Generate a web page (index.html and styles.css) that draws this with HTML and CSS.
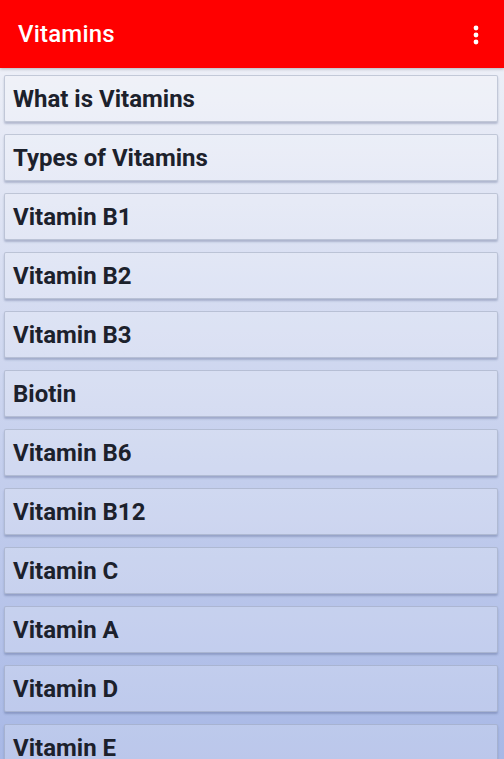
FILE: index.html
```html
<!DOCTYPE HTML>
<html lang="en-US">
<head>
<meta charset="utf-8">
<meta name="viewport" content="width=device-width">
<title>Vitamins</title>
<link rel="stylesheet" href="styles.css">
</head>
<body>
  <header class="toolbar">
    <h1>Vitamins</h1>
    <svg class="menu" width="6" height="20" viewBox="0 0 6 20">
      <circle cx="3" cy="3" r="2.4" fill="#fff"/>
      <circle cx="3" cy="10" r="2.4" fill="#fff"/>
      <circle cx="3" cy="17" r="2.4" fill="#fff"/>
    </svg>
  </header>
  <ul class="topics">
    <li>What is Vitamins</li>
    <li>Types of Vitamins</li>
    <li>Vitamin B1</li>
    <li>Vitamin B2</li>
    <li>Vitamin B3</li>
    <li>Biotin</li>
    <li>Vitamin B6</li>
    <li>Vitamin B12</li>
    <li>Vitamin C</li>
    <li>Vitamin A</li>
    <li>Vitamin D</li>
    <li>Vitamin E</li>
  </ul>
</body>
</html>
```

FILE: styles.css
```css
* {
	box-sizing: border-box;
}
html, body {
	height: 100%;
}
body {
	margin: 0;
	overflow: hidden;
	background: linear-gradient(#f3f4f9, #a8b8e6 759px);
	font-family: Roboto, "Liberation Sans", sans-serif;
}
.toolbar {
	height: 68px;
	display: flex;
	align-items: center;
	justify-content: space-between;
	padding: 0 25px 0 18px;
	background: #ff0000;
	box-shadow: 0 1px 3px rgba(0, 0, 0, .25);
	position: relative;
}
.toolbar h1 {
	margin: 0;
	color: #fff;
	font-size: 24px;
	font-weight: 500;
	letter-spacing: .2px;
}
.menu { display: block; margin-top: 1px; }

.topics {
	list-style: none;
	margin: 0;
	padding: 7px 6px 0 4px;
}
.topics li {
	height: 47px;
	margin-bottom: 12px;
	padding: 0 8px;
	display: flex;
	align-items: center;
	color: #1c212c;
	font-size: 24px;
	font-weight: 700;
	background: rgba(255, 255, 255, .22);
	border: 1px solid rgba(140, 150, 175, .45);
	border-radius: 2px;
	box-shadow: 0 2px 2px rgba(60, 75, 120, .3);
}
```
